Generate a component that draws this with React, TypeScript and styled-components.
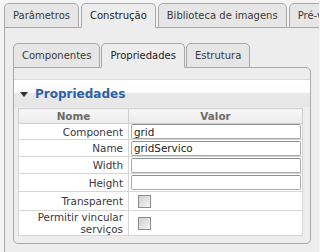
import styled, { createGlobalStyle } from 'styled-components'

const GlobalStyle = createGlobalStyle`
  html, body {
    margin: 0;
    padding: 0;
    background: #f4f4f4;
  }
  body {
    font-family: 'DejaVu Sans', Verdana, sans-serif;
    font-size: 10.4px;
    color: #333;
  }
`

const Page = styled.div`
  width: 319px;
  height: 252px;
  overflow: hidden;
  padding: 3px 0 0 4px;
  box-sizing: border-box;
`

const TabRow = styled.div<{ $gap: number }>`
  display: flex;
  gap: ${(p) => p.$gap}px;
  align-items: flex-end;
  position: relative;
  z-index: 1;
`

const Tab = styled.div<{ $active?: boolean }>`
  height: 23px;
  line-height: 23px;
  padding: 0 8px;
  font-size: 10px;
  white-space: nowrap;
  border: 1px solid #a9a9a9;
  border-bottom: ${(p) => (p.$active ? '1px solid #ededed' : '1px solid #a9a9a9')};
  border-radius: 5px 5px 0 0;
  background: ${(p) => (p.$active ? '#ededed' : '#e6e6e6')};
  color: ${(p) => (p.$active ? '#222' : '#3a3a3a')};
  margin-bottom: -1px;
  flex-shrink: 0;
`

const OuterPanel = styled.div`
  width: 340px;
  height: 240px;
  border: 1px solid #a9a9a9;
  background: #ededed;
  padding: 15px 0 0 8px;
  box-sizing: border-box;
`

const InnerPanel = styled.div`
  width: 298px;
  height: 177px;
  border: 1px solid #a9a9a9;
  border-radius: 0 5px 5px 5px;
  background: #ededed;
  box-sizing: border-box;
  padding-top: 11px;
`

const SectionHeader = styled.div`
  height: 28px;
  display: flex;
  align-items: center;
  gap: 7px;
  padding-left: 6px;
  border-top: 1px solid #dcdcdc;
  background: linear-gradient(to bottom, #ffffff 0%, #fdfdfd 45%, #e9e9e9 50%, #e6e6e6 100%);
  box-sizing: border-box;
`

const Arrow = styled.span`
  width: 0;
  height: 0;
  border-left: 4px solid transparent;
  border-right: 4px solid transparent;
  border-top: 5px solid #333;
  margin-top: 1px;
`

const SectionTitle = styled.span`
  font-size: 12px;
  font-weight: bold;
  color: #2f62a8;
`

const TableWrap = styled.div`
  padding: 1px 7px 0 4px;
`

const PropTable = styled.table`
  width: 285px;
  border-collapse: collapse;
  background: #fff;
  border: 1px solid #cfcfcf;
  table-layout: fixed;
`

const HeadCell = styled.th<{ $w?: number }>`
  width: ${(p) => (p.$w ? `${p.$w}px` : 'auto')};
  height: 14px;
  padding: 0;
  font-weight: bold;
  color: #6f6a66;
  background: linear-gradient(to bottom, #f7f7f7, #ebebeb);
  border: 1px solid #cfcfcf;
  text-align: center;
  line-height: 13px;
`

const Row = styled.tr<{ $h: number }>`
  height: ${(p) => p.$h}px;
`

const LabelCell = styled.td`
  padding: 0 5px 0 0;
  text-align: right;
  border: 1px solid #d6d6d6;
  color: #3b3640;
  line-height: 12px;
`

const ValueCell = styled.td`
  padding: 0 1px 0 2px;
  border: 1px solid #d6d6d6;
`

const TextInput = styled.input`
  display: block;
  width: 100%;
  height: 15px;
  box-sizing: border-box;
  border: 1px solid #a7a9ab;
  border-top-color: #8e9194;
  border-radius: 2px;
  padding: 0 2px;
  font-family: 'DejaVu Sans', Verdana, sans-serif;
  font-size: 10.4px;
  color: #222;
  background: #fff;
`

const CheckBox = styled.span`
  display: block;
  width: 11px;
  height: 11px;
  margin-left: 7px;
  border: 1px solid #8c8c8c;
  background: linear-gradient(135deg, #d0d0d0, #f4f4f4);
`

const props = [
  { label: 'Component', value: 'grid', h: 16 },
  { label: 'Name', value: 'gridServico', h: 17 },
  { label: 'Width', value: '', h: 17 },
  { label: 'Height', value: '', h: 18 },
]

export default function App() {
  return (
    <>
      <GlobalStyle />
      <Page>
        <TabRow $gap={2}>
          <Tab>Parâmetros</Tab>
          <Tab $active>Construção</Tab>
          <Tab>Biblioteca de imagens</Tab>
          <Tab>Pré-visualização</Tab>
        </TabRow>
        <OuterPanel>
          <TabRow $gap={1}>
            <Tab>Componentes</Tab>
            <Tab $active>Propriedades</Tab>
            <Tab>Estrutura</Tab>
          </TabRow>
          <InnerPanel>
            <SectionHeader>
              <Arrow />
              <SectionTitle>Propriedades</SectionTitle>
            </SectionHeader>
            <TableWrap>
              <PropTable>
                <thead>
                  <tr>
                    <HeadCell $w={109}>Nome</HeadCell>
                    <HeadCell>Valor</HeadCell>
                  </tr>
                </thead>
                <tbody>
                  {props.map((p) => (
                    <Row $h={p.h} key={p.label}>
                      <LabelCell>{p.label}</LabelCell>
                      <ValueCell>
                        <TextInput defaultValue={p.value} />
                      </ValueCell>
                    </Row>
                  ))}
                  <Row $h={19}>
                    <LabelCell>Transparent</LabelCell>
                    <ValueCell>
                      <CheckBox />
                    </ValueCell>
                  </Row>
                  <Row $h={25}>
                    <LabelCell>
                      Permitir vincular
                      <br />
                      serviços
                    </LabelCell>
                    <ValueCell>
                      <CheckBox />
                    </ValueCell>
                  </Row>
                </tbody>
              </PropTable>
            </TableWrap>
          </InnerPanel>
        </OuterPanel>
      </Page>
    </>
  )
}
